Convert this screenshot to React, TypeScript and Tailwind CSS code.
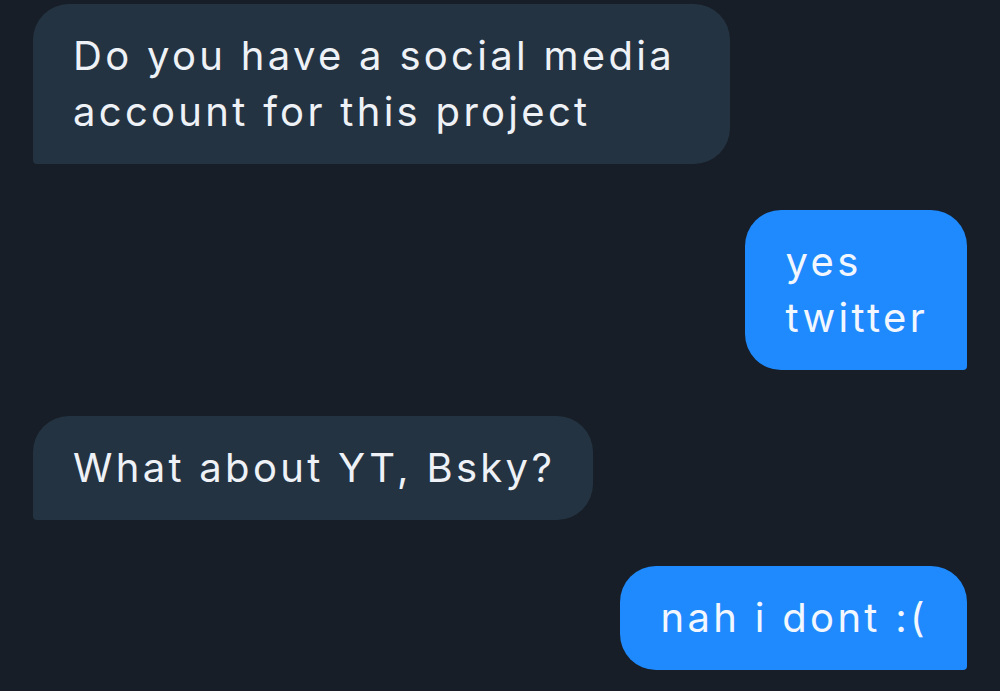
const messages = [
  { from: 'them', lines: ['Do you have a social media', 'account for this project'], wide: true },
  { from: 'me', lines: ['yes', 'twitter'] },
  { from: 'them', lines: ['What about YT, Bsky?'] },
  { from: 'me', lines: ['nah i dont :('] },
];

export default function App() {
  return (
    <div className="h-[691px] w-[1000px] overflow-hidden bg-[#171e27] font-['Inter',sans-serif]">
      <div className="flex flex-col gap-[46px] px-[33px] pt-[4px]">
        {messages.map((m, i) =>
          m.from === 'them' ? (
            <div key={i} className="flex justify-start">
              <div
                className={
                  'rounded-[36px] rounded-bl-[4px] bg-[#243342] py-[24px] pl-[40px] pr-[38px] text-[40px] leading-[56px] tracking-[3.3px] text-[#eef2f6] ' +
                  (m.wide ? 'w-[697px]' : '')
                }
              >
                {m.lines.map((l, j) => (
                  <div key={j} className="whitespace-nowrap">{l}</div>
                ))}
              </div>
            </div>
          ) : (
            <div key={i} className="flex justify-end">
              <div className="rounded-[36px] rounded-br-[4px] bg-[#1f8afd] py-[24px] pl-[41px] pr-[39px] text-[40px] leading-[56px] tracking-[3.3px] text-[#f2f7ff]">
                {m.lines.map((l, j) => (
                  <div key={j} className="whitespace-nowrap">{l}</div>
                ))}
              </div>
            </div>
          )
        )}
      </div>
    </div>
  );
}
